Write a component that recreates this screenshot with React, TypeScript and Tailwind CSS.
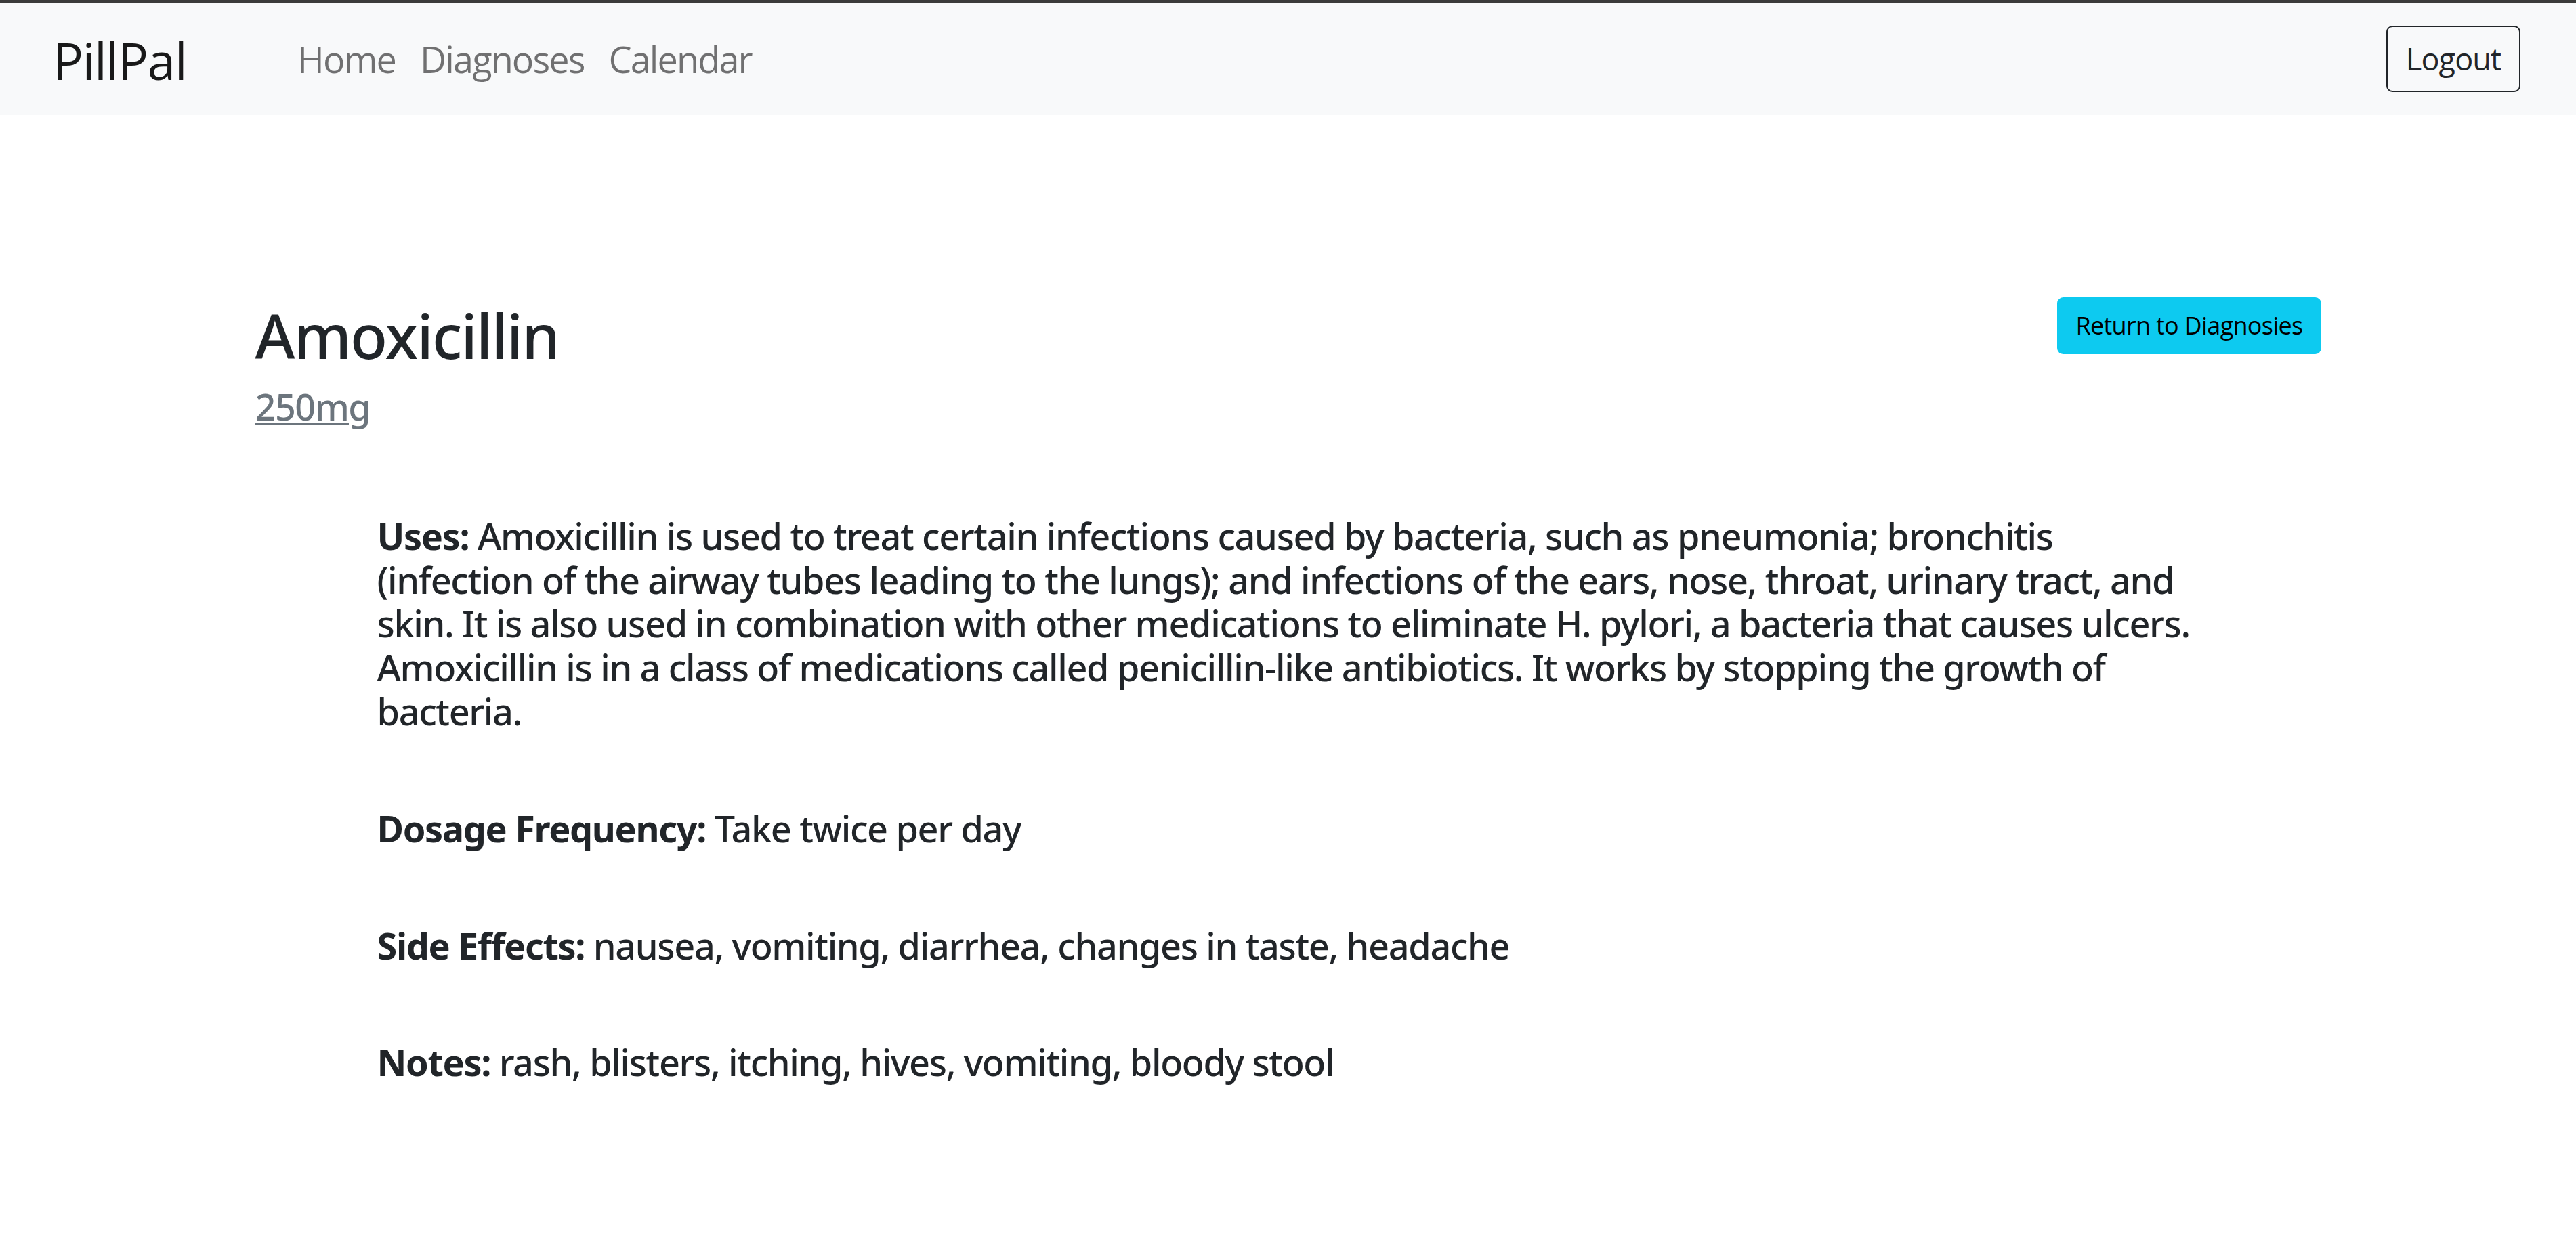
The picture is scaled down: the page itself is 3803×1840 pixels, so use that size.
export default function App() {
  const links = ["Home", "Diagnoses", "Calendar"];
  return (
    <div className="min-h-screen bg-white font-['Open_Sans',sans-serif] text-[#212529]">
      <div className="h-[4px] bg-[#3b3b3b]" />
      <nav className="flex h-[166px] items-center justify-between bg-[#f8f9fa] pl-[78px] pr-[82px]">
        <div className="flex items-center">
          <a className="mt-[4px] w-[343px] text-[75px] leading-[1.5] tracking-[-0.02em] text-[#191919]">PillPal</a>
          <div className="flex items-center">
            {links.map((l) => (
              <a
                key={l}
                className="px-[18px] text-[54px] leading-[1.5] tracking-[-0.035em] text-[rgba(0,0,0,0.55)]"
              >
                {l}
              </a>
            ))}
          </div>
        </div>
        <button className="h-[98px] w-[198px] rounded-[9px] border-2 border-[#212529] text-[45px] leading-[1.5] tracking-[-0.02em] text-[#212529]">
          Logout
        </button>
      </nav>

      <main className="mx-auto w-[3050px] pt-[269px] pb-[120px]">
        <div className="flex items-start justify-between">
          <div>
            <h1 className="mt-[2px] font-['Noto_Sans',sans-serif] text-[90px] font-medium leading-[108px] tracking-[-0.02em]">Amoxicillin</h1>
            <a className="mt-[19px] block font-['Noto_Sans',sans-serif] text-[54px] font-medium leading-[64.8px] tracking-[-0.028em] text-[#6c757d] underline decoration-4 underline-offset-[3px]">
              250mg
            </a>
          </div>
          <button className="h-[84px] rounded-[9px] bg-[#0dcaf0] px-[27px] text-[36px] leading-none tracking-[-0.02em] text-black">
            Return to Diagnosies
          </button>
        </div>

        <div className="ml-[180px] mt-[126px] flex flex-col gap-[108px] whitespace-nowrap font-['Noto_Sans',sans-serif] text-[54px] font-medium leading-[64.8px] tracking-[-0.025em]">
          <p>
            <strong className="font-bold">Uses:</strong> Amoxicillin is used to treat certain infections caused by bacteria, such as pneumonia; bronchitis
            <br />
            (infection of the airway tubes leading to the lungs); and infections of the ears, nose, throat, urinary tract, and
            <br />
            skin. It is also used in combination with other medications to eliminate H. pylori, a bacteria that causes ulcers.
            <br />
            Amoxicillin is in a class of medications called penicillin-like antibiotics. It works by stopping the growth of
            <br />
            bacteria.
          </p>
          <p>
            <strong className="font-bold">Dosage Frequency:</strong> Take twice per day
          </p>
          <p>
            <strong className="font-bold">Side Effects:</strong> nausea, vomiting, diarrhea, changes in taste, headache
          </p>
          <p>
            <strong className="font-bold">Notes:</strong> rash, blisters, itching, hives, vomiting, bloody stool
          </p>
        </div>
      </main>
    </div>
  );
}
